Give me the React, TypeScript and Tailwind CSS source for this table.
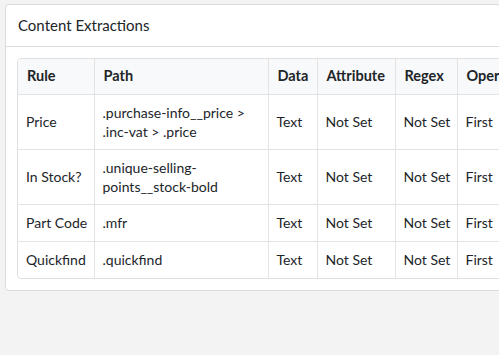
import React from "react";

const rows = [
  { rule: "Price", path: [".purchase-info__price >", ".inc-vat > .price"] },
  { rule: "In Stock?", path: [".unique-selling-", "points__stock-bold"] },
  { rule: "Part Code", path: [".mfr"] },
  { rule: "Quickfind", path: [".quickfind"] },
];

export default function App() {
  return (
    <div
      className="w-[499px] h-[355px] overflow-hidden bg-[#f3f3f3] pt-[4px] pl-[5px]"
      style={{ fontFamily: "Lato, 'Noto Sans', sans-serif" }}
    >
      <div className="w-[600px] bg-white border border-[#dcdcdc] rounded-[4px]">
        <div className="h-[42px] flex items-center px-[12px] border-b border-[#dcdcdc] text-[15px] text-[#212529]">
          Content Extractions
        </div>
        <div className="p-[11px]">
          <div className="w-[560px] border border-[#e0e0e0] rounded-[4px] overflow-hidden">
            <table className="table-fixed border-collapse text-[14px] text-[#212529] w-[560px]">
              <colgroup>
                <col className="w-[76px]" />
                <col className="w-[174px]" />
                <col className="w-[49px]" />
                <col className="w-[78px]" />
                <col className="w-[62px]" />
                <col className="w-[121px]" />
              </colgroup>
              <thead>
                <tr className="bg-[#f8f9fa] h-[35px]">
                  {["Rule", "Path", "Data", "Attribute", "Regex", "Operation"].map((h, i) => (
                    <th
                      key={h}
                      className={`text-left font-bold text-[14.5px] pl-[9px] pr-[7px] leading-[20px] border-b border-[#e3e3e3] ${i < 5 ? "border-r" : ""} whitespace-nowrap`}
                    >
                      {h}
                    </th>
                  ))}
                </tr>
              </thead>
              <tbody>
                {rows.map((r, idx) => (
                  <tr key={r.rule}>
                    <td className={`px-[8px] py-[8px] leading-[20px] border-r border-[#e3e3e3] ${idx < 3 ? "border-b" : ""} whitespace-nowrap`}>
                      {r.rule}
                    </td>
                    <td className={`px-[8px] py-[8px] leading-[19px] border-r border-[#e3e3e3] ${idx < 3 ? "border-b" : ""}`}>
                      {r.path.map((p, j) => (
                        <div key={j} className="whitespace-nowrap">{p}</div>
                      ))}
                    </td>
                    <td className={`px-[8px] py-[8px] leading-[20px] border-r border-[#e3e3e3] ${idx < 3 ? "border-b" : ""}`}>Text</td>
                    <td className={`px-[8px] py-[8px] leading-[20px] border-r border-[#e3e3e3] ${idx < 3 ? "border-b" : ""} whitespace-nowrap`}>Not Set</td>
                    <td className={`px-[8px] py-[8px] leading-[20px] border-r border-[#e3e3e3] ${idx < 3 ? "border-b" : ""} whitespace-nowrap`}>Not Set</td>
                    <td className={`px-[8px] py-[8px] leading-[20px] ${idx < 3 ? "border-b" : ""} border-[#e3e3e3]`}>First</td>
                  </tr>
                ))}
              </tbody>
            </table>
          </div>
        </div>
      </div>
    </div>
  );
}
